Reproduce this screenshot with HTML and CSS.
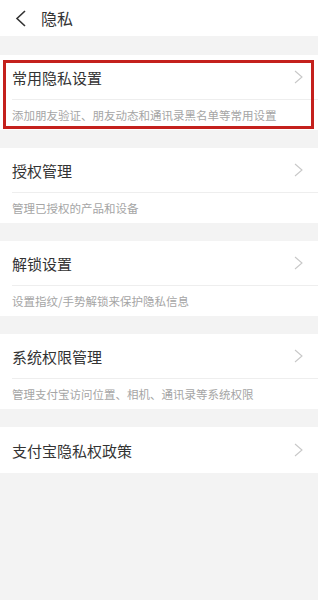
FILE: index.html
```html
<!DOCTYPE html>
<html lang="zh-CN">
<head>
    <meta charset="UTF-8">
    <title>隐私</title>
    <link rel="stylesheet" href="styles.css">
</head>
<body>
<div class="header">
    <svg class="back" width="12" height="17" viewBox="0 0 12 17">
        <polyline points="10,1 2,8.5 10,16" fill="none" stroke="#333" stroke-width="1.6"/>
    </svg>
    <span class="header-title">隐私</span>
</div>

<div class="list">
    <div class="card marked">
        <div class="row">
            <span class="title">常用隐私设置</span>
            <svg class="arrow" width="9" height="14" viewBox="0 0 9 14"><polyline points="1,1 8,7 1,13" fill="none" stroke="#c8c8c8" stroke-width="1.1"/></svg>
        </div>
        <div class="desc">添加朋友验证、朋友动态和通讯录黑名单等常用设置</div>
        <div class="mark"></div>
    </div>

    <div class="card">
        <div class="row">
            <span class="title">授权管理</span>
            <svg class="arrow" width="9" height="14" viewBox="0 0 9 14"><polyline points="1,1 8,7 1,13" fill="none" stroke="#c8c8c8" stroke-width="1.1"/></svg>
        </div>
        <div class="desc">管理已授权的产品和设备</div>
    </div>

    <div class="card">
        <div class="row">
            <span class="title">解锁设置</span>
            <svg class="arrow" width="9" height="14" viewBox="0 0 9 14"><polyline points="1,1 8,7 1,13" fill="none" stroke="#c8c8c8" stroke-width="1.1"/></svg>
        </div>
        <div class="desc">设置指纹/手势解锁来保护隐私信息</div>
    </div>

    <div class="card">
        <div class="row">
            <span class="title">系统权限管理</span>
            <svg class="arrow" width="9" height="14" viewBox="0 0 9 14"><polyline points="1,1 8,7 1,13" fill="none" stroke="#c8c8c8" stroke-width="1.1"/></svg>
        </div>
        <div class="desc">管理支付宝访问位置、相机、通讯录等系统权限</div>
    </div>

    <div class="card">
        <div class="row last">
            <span class="title">支付宝隐私权政策</span>
            <svg class="arrow" width="9" height="14" viewBox="0 0 9 14"><polyline points="1,1 8,7 1,13" fill="none" stroke="#c8c8c8" stroke-width="1.1"/></svg>
        </div>
    </div>
</div>
</body>
</html>
```

FILE: styles.css
```css
* {
    margin: 0;
    padding: 0;
    box-sizing: border-box;
}

html, body {
    height: 100%;
}

body {
    background-color: #f3f3f3;
    font-family: "Noto Sans CJK SC", "Noto Sans", sans-serif;
    color: #333;
}

.header {
    height: 36px;
    background-color: #fff;
    display: flex;
    align-items: center;
    padding-left: 15px;
}

.back {
    display: block;
}

.header-title {
    margin-left: 14px;
    font-size: 16px;
    color: #333;
}

.list {
    padding-top: 19px;
    display: flex;
    flex-direction: column;
    gap: 18px;
}

.card {
    position: relative;
    background-color: #fff;
    padding-left: 12px;
}

.row {
    height: 45px;
    display: flex;
    align-items: center;
    justify-content: space-between;
    padding-right: 15px;
    border-bottom: 1px solid #eeeeee;
}

.row.last {
    height: 46px;
    border-bottom: none;
}

.title {
    font-size: 15px;
    color: #333;
}

.arrow {
    display: block;
}

.desc {
    height: 30px;
    line-height: 30px;
    font-size: 11.5px;
    color: #a5a5a5;
}

/* red highlight frame drawn over the first card */
.mark {
    position: absolute;
    top: 5px;
    left: 3px;
    right: 4px;
    bottom: 1px;
    border: 3px solid #c4201c;
}
```
